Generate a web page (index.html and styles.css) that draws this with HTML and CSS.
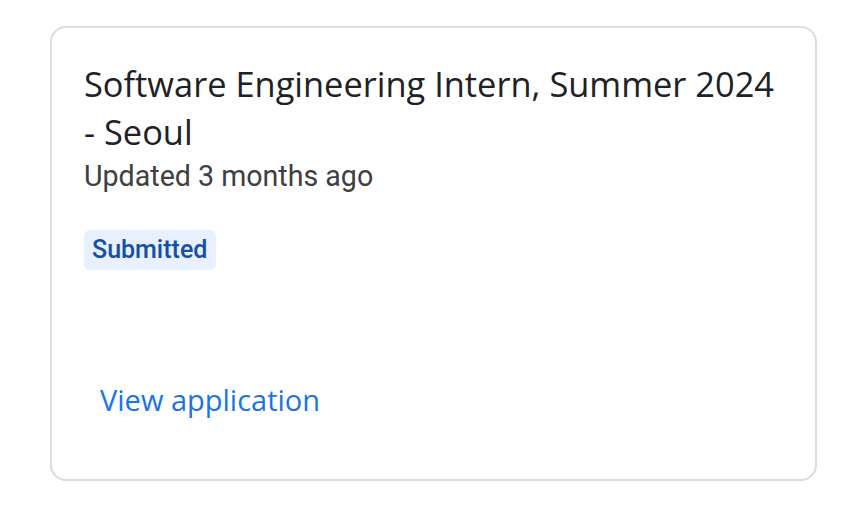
FILE: index.html
```html
<!DOCTYPE html>
<html>
<head>
<meta charset="utf-8">
<link rel="stylesheet" href="styles.css">
</head>
<body>
<div class="page">
  <div class="card">
    <h2 class="title">Software Engineering Intern, Summer 2024 - Seoul</h2>
    <div class="updated">Updated 3 months ago</div>
    <div class="status-row"><span class="badge">Submitted</span></div>
    <div class="actions"><a class="link" href="#">View application</a></div>
  </div>
</div>
</body>
</html>
```
FILE: styles.css
```css
html, body {
  margin: 0;
  padding: 0;
  background: #ffffff;
}
.page {
  padding: 26px 0 0 50px;
}
.card {
  box-sizing: border-box;
  width: 767px;
  height: 455px;
  border: 2px solid #dadce0;
  border-radius: 16px;
  padding: 32px 32px 0 32px;
  display: flex;
  flex-direction: column;
}
.title {
  margin: 0;
  font-family: "Open Sans", Roboto, sans-serif;
  font-weight: 400;
  font-size: 34.4px;
  line-height: 48px;
  color: #202124;
}
.updated {
  font-family: Roboto, "Liberation Sans", sans-serif;
  font-size: 28.6px;
  line-height: 40px;
  color: #3c4043;
}
.status-row {
  margin-top: 34px;
  display: flex;
}
.badge {
  font-family: Roboto, "Liberation Sans", sans-serif;
  font-weight: 500;
  font-size: 25px;
  line-height: 40px;
  padding: 0 9px 0 8px;
  border-radius: 6px;
  background: #e8f0fe;
  color: #174ea6;
}
.actions {
  margin-top: auto;
  margin-bottom: 59px;
  padding-left: 16px;
}
.link {
  font-family: "Open Sans", Roboto, sans-serif;
  font-weight: 500;
  font-size: 29px;
  line-height: 40px;
  color: #1a73e8;
  text-decoration: none;
}
```
